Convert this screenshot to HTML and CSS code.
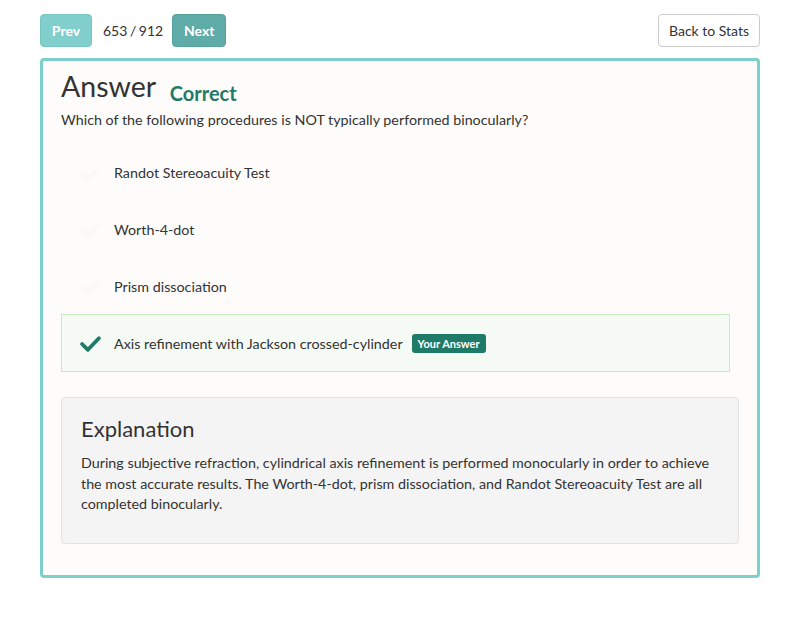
FILE: index.html
```html
<!DOCTYPE html>
<html>
<head>
<meta charset="utf-8">
<link rel="stylesheet" href="styles.css">
</head>
<body>
<div class="page">
  <div class="topbar">
    <div class="nav">
      <button class="btn btn-prev">Prev</button>
      <span class="counter">653 / 912</span>
      <button class="btn btn-next">Next</button>
    </div>
    <button class="btn btn-back">Back to Stats</button>
  </div>
  <div class="card">
    <h2 class="title">Answer <span class="status">Correct</span></h2>
    <p class="question">Which of the following procedures is NOT typically performed binocularly?</p>
    <ul class="options">
      <li class="option">
        <svg class="check faint" viewBox="0 0 20 16"><path d="M2 8.5 L7.5 14 L18 3" fill="none" stroke="currentColor" stroke-width="3.6" stroke-linecap="round" stroke-linejoin="round"/></svg>
        <span>Randot Stereoacuity Test</span>
      </li>
      <li class="option">
        <svg class="check faint" viewBox="0 0 20 16"><path d="M2 8.5 L7.5 14 L18 3" fill="none" stroke="currentColor" stroke-width="3.6" stroke-linecap="round" stroke-linejoin="round"/></svg>
        <span>Worth-4-dot</span>
      </li>
      <li class="option">
        <svg class="check faint" viewBox="0 0 20 16"><path d="M2 8.5 L7.5 14 L18 3" fill="none" stroke="currentColor" stroke-width="3.6" stroke-linecap="round" stroke-linejoin="round"/></svg>
        <span>Prism dissociation</span>
      </li>
      <li class="option selected">
        <svg class="check" viewBox="0 0 20 16"><path d="M2 8.5 L7.5 14 L18 3" fill="none" stroke="currentColor" stroke-width="3.6" stroke-linecap="round" stroke-linejoin="round"/></svg>
        <span>Axis refinement with Jackson crossed-cylinder</span>
        <span class="badge">Your Answer</span>
      </li>
    </ul>
    <div class="explanation">
      <h3>Explanation</h3>
      <p>During subjective refraction, cylindrical axis refinement is performed monocularly in order to achieve the most accurate results. The Worth-4-dot, prism dissociation, and Randot Stereoacuity Test are all completed binocularly.</p>
    </div>
  </div>
</div>
</body>
</html>
```

FILE: styles.css
```css
* { box-sizing: border-box; }
html, body { margin: 0; background: #ffffff; }
body {
  font-family: Lato, "Open Sans", sans-serif;
  color: #333333;
  font-size: 14px;
}
.page {
  padding: 14px 40px 0 40px;
}
.topbar {
  display: flex;
  justify-content: space-between;
  align-items: center;
  height: 33px;
  margin-bottom: 11px;
}
.nav {
  display: flex;
  align-items: center;
}
.btn {
  font-family: Lato, sans-serif;
  height: 33px;
  border-radius: 4px;
  font-size: 14px;
  padding: 0 12px;
  border: 1px solid transparent;
  cursor: pointer;
}
.btn-prev {
  width: 52px;
  background: #80cfcc;
  border-color: #76c6c3;
  color: #ffffff;
  font-weight: 700;
  padding: 0;
}
.btn-next {
  width: 54px;
  background: #5eaba8;
  border-color: #56a29f;
  color: #ffffff;
  font-weight: 700;
  padding: 0;
}
.counter {
  margin: 0 9px 0 11px;
  font-size: 14px;
  word-spacing: -1px;
  color: #333;
}
.btn-back {
  width: 102px;
  background: #ffffff;
  border-color: #cccccc;
  color: #333333;
  padding: 0;
}
.card {
  border: 3px solid #7dcfcb;
  border-radius: 4px;
  background: #fdfcfa;
  padding: 6px 18px 31px 18px;
}
.title {
  margin: 0 0 5px 0;
  font-size: 28.5px;
  font-weight: 400;
  line-height: 38px;
  color: #333;
}
.status {
  font-size: 20px;
  line-height: 1;
  font-weight: 700;
  color: #1f7a67;
  margin-left: 7px;
  vertical-align: -4px;
}
.question {
  margin: 0;
  font-size: 14.3px;
  line-height: 20px;
}
.options {
  list-style: none;
  margin: 14px 9px 0 0;
  padding: 0;
  font-size: 14.3px;
}
.option {
  display: flex;
  align-items: center;
  height: 57px;
  padding: 0 18px;
  border: 1px solid transparent;
}
.option.selected {
  height: 58px;
  margin-top: -1px;
  background: #f5faf4;
  border-color: #c9e8c2;
}
.check {
  width: 21px;
  height: 17px;
  margin-right: 13px;
  color: #1f7a67;
  flex: none;
}
.check.faint { color: #faf9f6; }
.badge {
  margin-left: 9px;
  background: #1f7a67;
  color: #fff;
  font-size: 11px;
  font-weight: 700;
  line-height: 19px;
  padding: 0 6px;
  border-radius: 3px;
}
.explanation {
  margin-top: 25px;
  background: #f4f4f4;
  border: 1px solid #e2e2e2;
  border-radius: 4px;
  padding: 16px 19px 28px 19px;
}
.explanation h3 {
  margin: 0 0 9px 0;
  font-size: 22px;
  font-weight: 400;
  line-height: 30px;
}
.explanation p {
  margin: 0;
  font-size: 14.3px;
  line-height: 20.5px;
}
```
